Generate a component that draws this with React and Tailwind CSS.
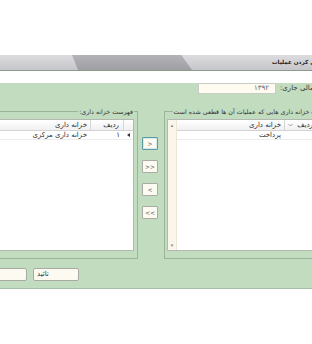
export default function App() {
  const Chevron = () => (
    <svg width="5" height="4" viewBox="0 0 5 4" className="shrink-0">
      <path d="M0.5 1 L2.5 3 L4.5 1" fill="none" stroke="#8a8a8a" strokeWidth="0.8" />
    </svg>
  );
  const MidBtn = ({ label, active }) => (
    <div
      className={
        "w-[16px] h-[13px] rounded-[1px] bg-[#fcfaf1] flex items-center justify-center text-[6px] leading-none text-[#444] " +
        (active
          ? "border border-[#5f9ba6] shadow-[inset_0_0_0_1px_#d3e9ec]"
          : "border border-[#a9aba7]")
      }
    >
      {label}
    </div>
  );
  return (
    <div className="w-[312px] h-[344px] overflow-hidden bg-white font-['DejaVu_Sans',sans-serif] text-[7px] leading-[9px] text-[#2b2b2b]">
      <div className="w-[384px] ml-[-44px] mt-[55px]">
        {/* tab bar */}
        <div className="flex h-[16px] border-b border-[#8d9b8c] bg-gradient-to-b from-[#dddcdf] to-[#c6c5c9]">
          <div className="w-[116px] shrink-0" />
          <div className="w-[120px] shrink-0 bg-gradient-to-b from-[#b4b3b8] to-[#9f9ea4] [clip-path:polygon(0_0,91%_0,100%_100%,5%_100%)]" />
          <div className="flex-1 flex items-center pl-[80px]">
            <span dir="rtl" className="whitespace-nowrap font-bold text-[5.6px] text-[#1e1e1e]">
              قطعی کردن عملیات
            </span>
          </div>
        </div>

        {/* green panel */}
        <div className="bg-[#c2dcc0] border-b border-[#a7bea6] pb-[7px]" dir="rtl">
          {/* input row */}
          <div className="flex items-center h-[11px] mt-[12px]">
            <div className="w-[60px] shrink-0 flex justify-end">
              <span className="whitespace-nowrap text-[#333]">سال مالی جاری:</span>
            </div>
            <div className="w-[78px] h-[11px] mr-[4px] bg-[#fffbf0] border border-[#c9cbc6] flex items-center pr-[6px] text-[#666]">
              ۱۳۹۲
            </div>
          </div>

          {/* group boxes row */}
          <div className="flex mt-[12px] pl-[8px]" dir="ltr">
            {/* left fieldset */}
            <fieldset
              dir="rtl"
              className="min-w-0 w-[174px] h-[153px] shrink-0 border border-[#9db49c] px-[3px]"
            >
              <legend className="px-[1px] leading-[11px] whitespace-nowrap text-[6.3px] text-[#333]">
                فهرست خزانه داری:
              </legend>
              <div className="h-[132px] mt-[2px] bg-white border border-[#b3b8b3] flex flex-col">
                <div className="flex h-[11px] border-b border-[#d3d3d3] bg-gradient-to-b from-white to-[#f0f0f0]">
                  <div className="w-[10px] shrink-0 border-l border-[#d6d6d6]" />
                  <div className="w-[33px] shrink-0 border-l border-[#d6d6d6] pr-[4px] flex items-center">
                    ردیف
                  </div>
                  <div className="flex-1 pr-[3px] flex items-center">خزانه داری</div>
                </div>
                <div className="flex h-[9px] border-b border-[#ececec]">
                  <div className="w-[10px] shrink-0 flex items-center justify-center">
                    <svg width="3" height="4" viewBox="0 0 3 4">
                      <path d="M3 0 L0 2 L3 4 Z" fill="#333" />
                    </svg>
                  </div>
                  <div className="w-[33px] shrink-0 pr-[3px] flex items-center">۱</div>
                  <div className="flex-1 pr-[3px] flex items-center whitespace-nowrap">
                    خزانه داری مرکزی
                  </div>
                </div>
              </div>
            </fieldset>

            {/* middle buttons */}
            <div className="w-[26px] shrink-0 flex flex-col pl-[4px] pt-[31px] gap-[10px]">
              <MidBtn label=">" active />
              <MidBtn label=">>" />
              <MidBtn label="<" />
              <MidBtn label="<<" />
            </div>

            {/* right fieldset */}
            <fieldset
              dir="rtl"
              className="min-w-0 w-[168px] h-[153px] shrink-0 border border-[#9db49c] pl-[2px] pr-[3px]"
            >
              <legend className="px-[1px] leading-[11px] whitespace-nowrap text-[6.3px] text-[#333]">
                لیست خزانه داری هایی که عملیات آن ها قطعی شده است
              </legend>
              <div className="h-[132px] mt-[2px] bg-white border border-[#b3b8b3] flex">
                <div className="flex-1 flex flex-col">
                  <div className="flex h-[11px] border-b border-[#d3d3d3] bg-gradient-to-b from-white to-[#f0f0f0]">
                    <div className="w-[10px] shrink-0 border-l border-[#d6d6d6]" />
                    <div className="w-[33px] shrink-0 border-l border-[#d6d6d6] pr-[4px] pl-[3px] flex items-center justify-between">
                      <span>ردیف</span>
                      <Chevron />
                    </div>
                    <div className="flex-1 pr-[3px] flex items-center">خزانه داری</div>
                  </div>
                  <div className="flex h-[9px] border-b border-[#ececec]">
                    <div className="w-[10px] shrink-0" />
                    <div className="w-[33px] shrink-0 pr-[1px] flex items-center">۱</div>
                    <div className="flex-1 pr-[3px] flex items-center">پرداخت</div>
                  </div>
                </div>
                <div className="w-[9px] shrink-0 bg-[#fbf6e9] border-r border-[#ece6d4] flex flex-col items-center justify-between py-[2px] text-[5px] leading-[6px] text-[#888]">
                  <span>▴</span>
                  <span>▾</span>
                </div>
              </div>
            </fieldset>
          </div>

          {/* bottom buttons */}
          <div className="flex mt-[9px] pl-[1px] gap-[6px]" dir="ltr">
            <div className="w-[70px] h-[13px] bg-[#fdfbf1] border border-[#a8aaa6] rounded-[2px] flex items-center pl-[3px]">
              <span dir="rtl">انصراف</span>
            </div>
            <div className="w-[46px] h-[13px] bg-[#fdfbf1] border border-[#a8aaa6] rounded-[2px] flex items-center pl-[3px]">
              <span dir="rtl">تائید</span>
            </div>
          </div>
        </div>
      </div>
    </div>
  );
}
